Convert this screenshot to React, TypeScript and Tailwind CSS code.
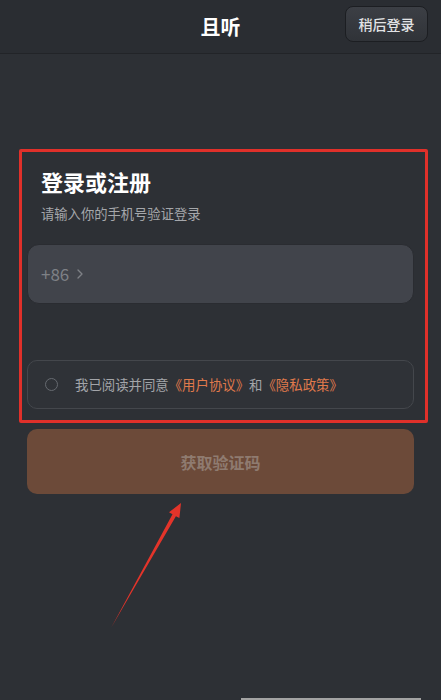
import { ChevronRight } from "lucide-react";

const font = { fontFamily: '"Noto Sans CJK SC", "Noto Sans", sans-serif' };

export default function App() {
  return (
    <div className="relative h-[700px] w-[441px] overflow-hidden bg-[#2d3035] text-white" style={font}>
      {/* Header */}
      <header className="relative flex h-[54px] items-center justify-center border-b border-[#222428] bg-[#2a2d32]">
        <h1 className="text-[20px] font-bold">且听</h1>
        <button className="absolute right-[13px] top-[6px] h-[36px] w-[83px] rounded-lg border border-[#1c1e22] bg-gradient-to-b from-[#3c3f45] to-[#303338] text-[14px] font-medium text-[#e2e3e5]">
          稍后登录
        </button>
      </header>

      {/* Form */}
      <main className="px-[27px] pt-[112px]">
        <div className="pl-[14px]">
          <h2 className="text-[22px] font-bold leading-[30px]">登录或注册</h2>
          <p className="mt-[8px] text-[13.3px] leading-[20px] text-[#a5a7ab]">请输入你的手机号验证登录</p>
        </div>

        <div className="mt-[20px] flex h-[60px] items-center rounded-[12px] border border-[#2a2c31] bg-[#41444b] pl-[13px] text-[17px] text-[#7e8186]">
          <span>+86</span>
          <ChevronRight className="ml-[3px] h-[16px] w-[16px]" strokeWidth={2} />
        </div>

        <div className="mt-[56px] flex h-[49px] items-center rounded-[10px] border border-[#44474c] bg-[#2f3237] pl-[17px] text-[13.4px] text-[#a3a5a9]">
          <span className="h-[13px] w-[13px] rounded-full border-[1.5px] border-[#666a70]" />
          <span className="ml-[17px]">
            我已阅读并同意<span className="text-[#e07a4c]">《用户协议》</span>和<span className="text-[#e07a4c]">《隐私政策》</span>
          </span>
        </div>

        <button className="mt-[20px] flex h-[65px] w-full items-center justify-center rounded-[10px] bg-[#6c4a39] text-[16px] font-bold text-[#8f7b70]">
          获取验证码
        </button>
      </main>

      {/* Red annotation frame */}
      <div className="pointer-events-none absolute left-[19px] top-[149px] h-[274px] w-[409px] rounded-[2px] border-[3px] border-[#e0302a]" />

      {/* Red annotation arrow */}
      <svg className="pointer-events-none absolute left-[100px] top-[495px]" width="100" height="140" viewBox="0 0 100 140">
        <polygon points="11,133 72.5,19.2 69,17.3 81,8 79.4,23.1 75.9,21.2" fill="#e3342a" />
      </svg>

      {/* Home indicator */}
      <div className="absolute bottom-0 left-[241px] h-[2px] w-[180px] bg-[#a3a3a3]" />
    </div>
  );
}
